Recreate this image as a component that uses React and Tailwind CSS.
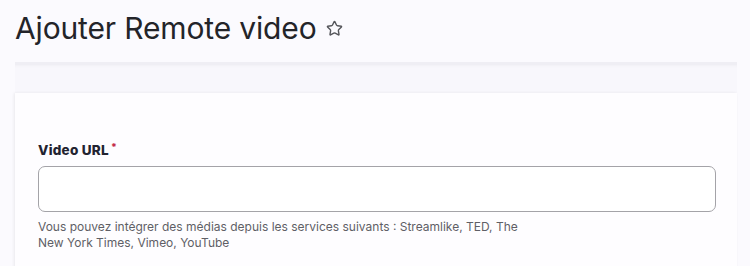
import { Star } from "lucide-react";

const App = () => {
  return (
    <div
      className="h-[266px] w-[750px] overflow-hidden bg-[#fbfafe]"
      style={{ fontFamily: "Inter, 'Noto Sans', sans-serif" }}
    >
      <div className="flex items-center gap-[10px] pl-[15px] pt-[5px] h-[50px]">
        <h1 className="text-[30px] leading-none text-[#232429] tracking-[-0.15px]">
          Ajouter Remote video
        </h1>
        <Star className="size-[17px] text-[#55565b] mt-[2px]" strokeWidth={2} />
      </div>

      <div className="ml-[15px] mr-[13px] mt-[12px] h-[31px] bg-[#f8f7fc] border-t-[3px] border-[#efeef4] shadow-[inset_0_3px_3px_-2px_rgba(0,0,0,0.03)]" />

      <div className="ml-[15px] mr-[13px] bg-[#fefdff] shadow-[-1px_0_3px_rgba(0,0,0,0.07)] pl-[23px] pr-[20px] pt-[49px] pb-[20px]">
        <label className="flex items-start text-[13.5px] leading-[16px] font-extrabold tracking-[0.25px] text-[#222330]">
          Video URL
          <span className="ml-[2px] text-[10px] leading-[10px] text-[#c4304a]">*</span>
        </label>
        <input
          type="text"
          className="mt-[8px] block h-[46px] w-[678px] rounded-[7px] border-[1.5px] border-[#a4a3a8] bg-white"
        />
        <p className="mt-[7px] w-[495px] text-[12px] leading-[16px] text-[#5f5f66]">
          Vous pouvez intégrer des médias depuis les services suivants : Streamlike, TED, The New York Times, Vimeo, YouTube
        </p>
      </div>
    </div>
  );
};

export default App;
